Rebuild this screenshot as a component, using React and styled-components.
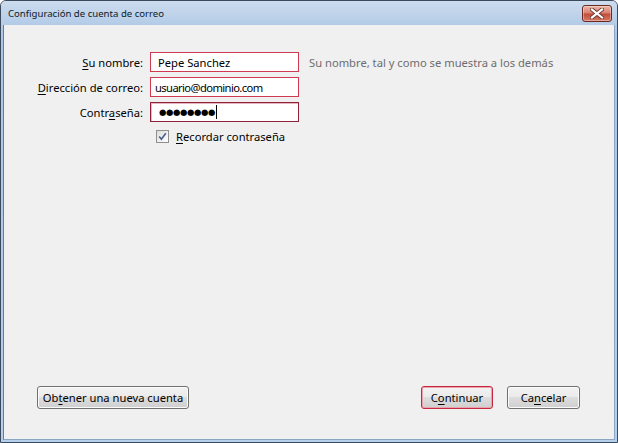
import React from 'react';
import styled, { createGlobalStyle } from 'styled-components';

const GlobalStyle = createGlobalStyle`
  html, body {
    margin: 0;
    padding: 0;
    background: #ffffff;
  }
  body {
    font-family: 'Noto Sans', 'Open Sans', sans-serif;
    font-size: 11.2px;
    color: #000;
  }
`;

const Window = styled.div`
  box-sizing: border-box;
  width: 618px;
  height: 443px;
  border: 1px solid #3b4a5c;
  border-radius: 6px 6px 0 0;
  background: linear-gradient(#c4d7ec, #a9c6e6 40px, #b4d0ec);
  display: flex;
  flex-direction: column;
  overflow: hidden;
`;

const TitleBar = styled.div`
  height: 24px;
  flex: none;
  display: flex;
  align-items: center;
  justify-content: space-between;
  padding: 0 5px 0 7px;
  background: linear-gradient(#cddcee, #b3cbe7);
`;

const Title = styled.span`
  font-size: 9.6px;
  color: #0f1a26;
`;

const CloseButton = styled.div`
  box-sizing: border-box;
  width: 30px;
  height: 17px;
  margin-top: 1px;
  border: 1px solid #6a2a22;
  border-radius: 3px;
  background: linear-gradient(#ebb6aa, #d98070 48%, #c44a37 52%, #d67a66);
  display: flex;
  align-items: center;
  justify-content: center;
  box-shadow: inset 0 0 0 1px rgba(255, 255, 255, 0.35);
`;

const Content = styled.div`
  flex: 1;
  margin: 0 2px 2px 2px;
  background: #f0f0f0;
  border-left: 1px solid #6d7a88;
  border-right: 1px solid #8aa6c2;
  border-bottom: 1px solid #8aa6c2;
  display: flex;
  flex-direction: column;
`;

const Form = styled.div`
  display: grid;
  grid-template-columns: 139px 149px auto;
  grid-auto-rows: 20px;
  column-gap: 7px;
  row-gap: 5px;
  padding-top: 27px;
`;

const Label = styled.label`
  justify-self: end;
  align-self: center;
  white-space: nowrap;
`;

const Key = styled.span`
  text-decoration: underline;
  text-underline-offset: 2px;
`;

const Field = styled.div`
  box-sizing: border-box;
  height: 20px;
  border: 1px solid ${p => (p.$focused ? '#8d2238' : '#cf3a50')};
  background: #fff;
  display: flex;
  align-items: center;
  padding-left: ${p => (p.$small ? 4 : 7)}px;
  letter-spacing: ${p => (p.$small ? '-0.6px' : 'normal')};
  white-space: nowrap;
  overflow: hidden;
  box-shadow: ${p => (p.$focused ? 'inset 1px 1px 0 #e6b5bf' : 'none')};
`;

const Dots = styled.span`
  font-family: 'DejaVu Sans', sans-serif;
  font-size: 8.5px;
  letter-spacing: -0.4px;
  color: #000;
  padding-left: 1px;
`;

const Caret = styled.span`
  display: inline-block;
  width: 1px;
  height: 14px;
  background: #000;
  margin-left: 1px;
`;

const Hint = styled.span`
  align-self: center;
  padding-left: 3px;
  color: #6d6d6d;
  white-space: nowrap;
`;

const CheckRow = styled.div`
  grid-column: 2 / 4;
  display: flex;
  align-items: center;
  gap: 7px;
  padding-left: 6px;
  margin-top: -1px;
`;

const Box = styled.span`
  box-sizing: border-box;
  width: 13px;
  height: 13px;
  border: 1px solid #8f8f8f;
  background: linear-gradient(135deg, #dcdcdc, #ffffff);
  display: flex;
  align-items: center;
  justify-content: center;
`;

const Footer = styled.div`
  margin-top: auto;
  display: flex;
  align-items: center;
  padding: 0 34px 30px 33px;
`;

const Button = styled.button`
  box-sizing: border-box;
  height: 23px;
  width: ${p => p.$width || 73}px;
  font-family: 'Noto Sans', 'Open Sans', sans-serif;
  font-size: 11.2px;
  color: #000;
  padding: 0 4px;
  white-space: nowrap;
  border: 1px solid ${p => (p.$default ? '#c8283f' : '#707070')};
  border-radius: 3px;
  background: linear-gradient(#f2f2f2, #ebebeb 45%, #dddddd 50%, #cfcfcf);
  box-shadow: inset 0 0 0 1px ${p => (p.$default ? '#e9a3ad' : '#fbfbfb')};
  margin-left: ${p => p.$gap || 0}px;
`;

const Spacer = styled.div`
  flex: 1;
`;

function App() {
  return (
    <>
      <GlobalStyle />
      <Window>
        <TitleBar>
          <Title>Configuración de cuenta de correo</Title>
          <CloseButton>
            <svg width="14" height="11" viewBox="0 0 14 11">
              <path d="M2 1.5 L12 9.5 M12 1.5 L2 9.5" stroke="#6a3a32" strokeWidth="4" strokeLinecap="square" />
              <path d="M2 1.5 L12 9.5 M12 1.5 L2 9.5" stroke="#ffffff" strokeWidth="2.2" strokeLinecap="square" />
            </svg>
          </CloseButton>
        </TitleBar>
        <Content>
          <Form>
            <Label><Key>S</Key>u nombre:</Label>
            <Field>Pepe Sanchez</Field>
            <Hint>Su nombre, tal y como se muestra a los demás</Hint>

            <Label><Key>D</Key>irección de correo:</Label>
            <Field $small>usuario@dominio.com</Field>
            <span />

            <Label>Contr<Key>a</Key>seña:</Label>
            <Field $focused>
              <Dots>●●●●●●●●</Dots>
              <Caret />
            </Field>
            <span />

            <span />
            <CheckRow>
              <Box>
                <svg width="9" height="9" viewBox="0 0 9 9">
                  <path d="M1.2 4.6 L3.4 7.3 L7.8 1.2" fill="none" stroke="#4b5d8f" strokeWidth="1.6" />
                </svg>
              </Box>
              <span><Key>R</Key>ecordar contraseña</span>
            </CheckRow>
          </Form>
          <Footer>
            <Button $width={152}>Ob<Key>t</Key>ener una nueva cuenta</Button>
            <Spacer />
            <Button $default $width={72}>C<Key>o</Key>ntinuar</Button>
            <Button $width={73} $gap={14}>Ca<Key>n</Key>celar</Button>
          </Footer>
        </Content>
      </Window>
    </>
  );
}

export default App;
